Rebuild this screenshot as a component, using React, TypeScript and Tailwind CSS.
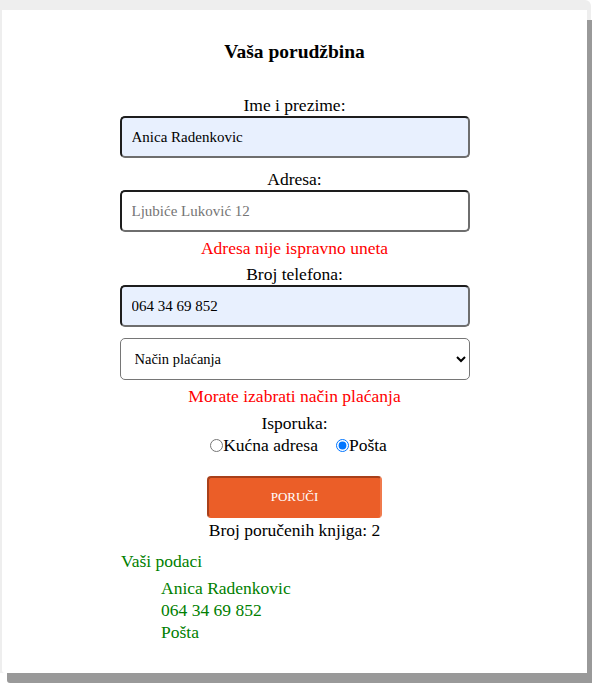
import { useState } from "react";

const serif = "font-['Liberation_Serif',serif]";

const inputCls =
  "w-[350px] h-[42px] rounded-[5px] border-2 border-[#1d1d1d] border-r-[#6e6e6e] border-b-[#6e6e6e] px-[10px] text-[15px] outline-none " +
  serif;

const App = () => {
  const [ime, setIme] = useState("Anica Radenkovic");
  const [telefon, setTelefon] = useState("064 34 69 852");
  const [isporuka, setIsporuka] = useState("posta");

  return (
    <div className={`min-h-[691px] bg-white ${serif} text-[17.5px] leading-[22px] text-black`}>
      <div className="bg-[#eeeeee] rounded-tr-[6px] pt-[10px] pl-[2px] w-[591px]">
        <div className="w-[585px] h-[663px] bg-white shadow-[5px_10px_0_#999999] rounded-bl-[3px] flex flex-col items-center pt-[30px]">
          <h2 className="text-[19.5px] font-bold leading-[24px] mb-[18px]">Vaša porudžbina</h2>

          <label className="mt-[12px]">Ime i prezime:</label>
          <input
            className={`${inputCls} bg-[#e8f0fe]`}
            value={ime}
            onChange={(e) => setIme(e.target.value)}
          />

          <label className="mt-[10px]">Adresa:</label>
          <input className={`${inputCls} bg-white placeholder:text-[#757575]`} placeholder="Ljubiće Luković 12" />
          <span className="text-[#ff0000] mt-[5px]">Adresa nije ispravno uneta</span>

          <label className="mt-[4px]">Broj telefona:</label>
          <input
            className={`${inputCls} bg-[#e8f0fe]`}
            value={telefon}
            onChange={(e) => setTelefon(e.target.value)}
          />

          <select
            className={`mt-[11px] w-[350px] h-[42px] rounded-[5px] border border-[#767676] bg-white pl-[10px] pr-[6px] text-[14.5px] ${serif}`}
            defaultValue=""
          >
            <option value="">Način plaćanja</option>
            <option value="pouzece">Pouzećem</option>
            <option value="kartica">Karticom</option>
          </select>
          <span className="text-[#ff0000] mt-[5px]">Morate izabrati način plaćanja</span>

          <span className="mt-[5px]">Isporuka:</span>
          <div className="flex items-center ml-[8px]">
            <label className="flex items-center">
              <input
                type="radio"
                name="isporuka"
                checked={isporuka === "adresa"}
                onChange={() => setIsporuka("adresa")}
                className="w-[13px] h-[13px] m-0"
              />
              Kućna adresa
            </label>
            <label className="flex items-center ml-[18px]">
              <input
                type="radio"
                name="isporuka"
                checked={isporuka === "posta"}
                onChange={() => setIsporuka("posta")}
                className="w-[13px] h-[13px] m-0"
              />
              Pošta
            </label>
          </div>

          <button className="mt-[20px] w-[175px] h-[42px] rounded-[4px] bg-[#eb5e28] border-2 border-[#a8401a] border-r-[#f07a4c] border-b-[#eb5e28] text-white text-[13px]">
            PORUČI
          </button>
          <span className="mt-[1px]">Broj poručenih knjiga: 2</span>

          <div className="self-start ml-[119px] mt-[9px] text-[#008000]">
            <p>Vaši podaci</p>
            <div className="ml-[40px] mt-[5px]">
              <p>Anica Radenkovic</p>
              <p>064 34 69 852</p>
              <p>Pošta</p>
            </div>
          </div>
        </div>
      </div>
    </div>
  );
};

export default App;
